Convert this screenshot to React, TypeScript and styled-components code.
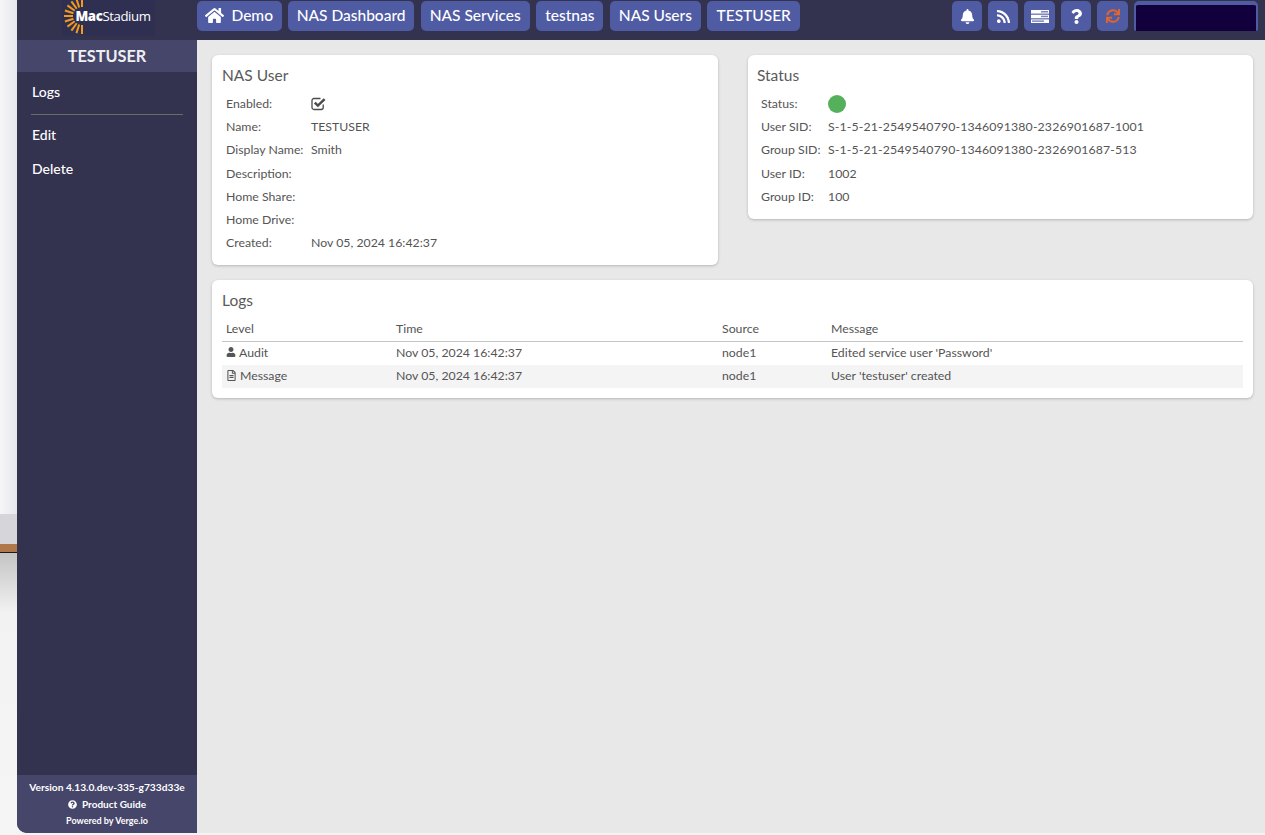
import React from "react";
import styled, { createGlobalStyle } from "styled-components";
import { FaHome, FaBell, FaRss, FaQuestion, FaSync, FaUser, FaRegFileAlt, FaQuestionCircle } from "react-icons/fa";

const Global = createGlobalStyle`
  html, body { margin: 0; padding: 0; height: 100%; overflow: hidden; }
  body { font-family: "Lato", "Open Sans", sans-serif; background: #f4f4f6; }
  #root { height: 100%; }
`;

const Shell = styled.div`
  display: flex;
  width: 1265px;
  height: 835px;
  overflow: hidden;
`;

const Backdrop = styled.div`
  width: 17px;
  flex: none;
  display: flex;
  flex-direction: column;
  box-shadow: inset -2px 0 2px -1px #8c8e96;
`;
const BackdropTop = styled.div`
  height: 514px;
  background: linear-gradient(90deg, #f6f6f8, #e6e8ee);
`;
const BackdropMid = styled.div`
  height: 30px;
  background: #d6d6da;
`;
const BackdropBand = styled.div`
  height: 8px;
  background: #b0784a;
  border-bottom: 1px solid #1a1a1a;
`;
const BackdropLow = styled.div`
  flex: 1;
  background: linear-gradient(180deg, #c4c4c4 0, #f2f2f2 60px, #f5f5f5 100%);
`;

const App = styled.div`
  flex: 1;
  height: 833px;
  display: flex;
  flex-direction: column;
  background: #e8e8e8;
  border-bottom-left-radius: 10px;
  overflow: hidden;
`;

const TopBar = styled.header`
  height: 40px;
  flex: none;
  display: flex;
  background: #33324f;
  padding-top: 1px;
  box-sizing: border-box;
`;
const LogoArea = styled.div`
  width: 180px;
  flex: none;
  display: flex;
  justify-content: center;
  margin-top: -1px;
  height: 36px;
`;
const Logo = styled.div`
  width: 93px;
  margin-left: 2px;
  display: flex;
  align-items: center;
  background: #2f2f52;
`;
const LogoText = styled.span`
  font-family: "Open Sans", sans-serif;
  color: #fff;
  font-size: 13.2px;
  letter-spacing: -0.4px;
  margin-left: -18px;
  margin-top: -5px;
  white-space: nowrap;
`;
const LogoBold = styled.b`
  font-weight: 800;
`;
const Crumbs = styled.nav`
  display: flex;
  gap: 6.6px;
`;
const Crumb = styled.a<{ $w: number }>`
  width: ${(p) => p.$w}px;
  height: 30px;
  padding-bottom: 2px;
  box-sizing: border-box;
  display: flex;
  align-items: center;
  justify-content: center;
  gap: 7px;
  background: #4f5ba3;
  border-radius: 5px;
  color: #fff;
  font-size: 15.5px;
  font-weight: 500;
`;
const Tools = styled.div`
  margin-left: auto;
  margin-right: 7px;
  display: flex;
  gap: 6px;
`;
const ToolBtn = styled.a<{ $w?: number; $c?: string }>`
  width: ${(p) => p.$w ?? 30}px;
  height: 30px;
  display: flex;
  align-items: center;
  justify-content: center;
  background: #4f5ba3;
  border-radius: 5px;
  color: ${(p) => p.$c ?? "#fff"};
  font-size: 15px;
`;
const SearchBox = styled.div`
  width: 124px;
  height: 30px;
  box-sizing: border-box;
  background: #12003c;
  border: solid #4f5ba3;
  border-width: 4px 2px 0;
  border-radius: 5px 5px 2px 2px;
`;

const Body = styled.div`
  flex: 1;
  display: flex;
  min-height: 0;
`;
const Sidebar = styled.aside`
  width: 180px;
  flex: none;
  display: flex;
  flex-direction: column;
  background: #33324f;
  color: #fff;
`;
const SideTitle = styled.div`
  height: 32px;
  padding-bottom: 2px;
  box-sizing: border-box;
  display: flex;
  align-items: center;
  justify-content: center;
  background: #46466a;
  font-size: 16.3px;
  font-weight: 700;
  color: #eeeef2;
`;
const SideItem = styled.a`
  display: block;
  padding-left: 15px;
  height: 34px;
  line-height: 40px;
  font-size: 14px;
  font-weight: 500;
`;
const SideRule = styled.hr`
  border: 0;
  height: 1px;
  background: #6c6a6c;
  margin: 8px 14px 0 14px;
`;
const SideFoot = styled.div`
  margin-top: auto;
  height: 58px;
  background: #46466a;
  display: flex;
  flex-direction: column;
  align-items: center;
  padding-top: 5px;
  box-sizing: border-box;
  gap: 1.5px;
  font-size: 10.2px;
  font-weight: 700;
  line-height: 15px;
`;
const GuideLine = styled.div`
  display: flex;
  align-items: center;
  gap: 5px;
  font-size: 10px;
`;
const Powered = styled.div`
  font-size: 9px;
`;

const Main = styled.main`
  flex: 1;
  padding: 15px 12px 0 15px;
  display: grid;
  grid-template-columns: 506px 505px;
  column-gap: 30px;
  row-gap: 15px;
  align-content: start;
  color: #555;
`;
const Card = styled.section<{ $wide?: boolean; $inset?: number }>`
  grid-column: ${(p) => (p.$wide ? "1 / -1" : "auto")};
  align-self: start;
  background: #fff;
  border-radius: 6px;
  box-shadow: 0 1px 3px rgba(0, 0, 0, 0.22);
  padding: 11px 10px ${(p) => (p.$wide ? 10 : 11)}px ${(p) => p.$inset ?? 10}px;
`;
const CardTitle = styled.h2`
  margin: 0 0 8px;
  font-size: 15.5px;
  line-height: 18px;
  font-weight: 400;
  color: #5a5a5a;
`;
const Fields = styled.div<{ $label: number }>`
  display: grid;
  grid-template-columns: ${(p) => p.$label}px 1fr;
  grid-auto-rows: 23.2px;
  padding-left: 4px;
  align-items: center;
  font-size: 12.3px;
`;
const Label = styled.div``;
const Value = styled.div`
  display: flex;
  align-items: center;
`;
const Sid = styled.span`
  letter-spacing: 0.14px;
`;
const StatusDot = styled.span`
  width: 18px;
  height: 18px;
  border-radius: 50%;
  background: #55b05b;
`;
const Table = styled.table`
  width: 100%;
  border-collapse: collapse;
  table-layout: fixed;
  font-size: 12.3px;
`;
const Th = styled.th<{ $w?: number }>`
  box-sizing: border-box;
  width: ${(p) => (p.$w ? `${p.$w}px` : "auto")};
  height: 24px;
  padding: 0 4px 2px;
  text-align: left;
  font-weight: 400;
  border-bottom: 1px solid #c4c4c4;
`;
const Tr = styled.tr<{ $alt?: boolean }>`
  background: ${(p) => (p.$alt ? "#f4f4f4" : "transparent")};
`;
const Td = styled.td`
  box-sizing: border-box;
  height: 23.5px;
  padding: 0 4px 2px;
`;
const LevelCell = styled.span`
  display: inline-flex;
  align-items: center;
  gap: 3px;
  vertical-align: middle;
  margin-bottom: 1px;
`;

const ServerIcon = () => (
  <svg width="18" height="13" viewBox="0 0 18 13">
    <rect x="0" y="0" width="18" height="3.6" fill="#fff" />
    <rect x="0" y="4.7" width="18" height="3.6" fill="#fff" />
    <rect x="0" y="9.4" width="18" height="3.6" fill="#fff" />
    <rect x="10" y="1" width="7" height="1.5" fill="#7f88bd" />
    <rect x="10" y="5.7" width="7" height="1.5" fill="#7f88bd" />
    <rect x="1" y="10.4" width="12" height="1.5" fill="#7f88bd" />
  </svg>
);

const CheckIcon = () => (
  <svg width="16" height="14" viewBox="0 0 16 14">
    <path
      d="M12.2 7.5V10.5a2 2 0 0 1-2 2H3a2 2 0 0 1-2-2V3.5a2 2 0 0 1 2-2H9.5"
      stroke="#4a4a4a"
      strokeWidth="1.3"
      fill="none"
    />
    <path d="M3.8 5.6L6.9 8.6L13.6 2.2" stroke="#4a4a4a" strokeWidth="2.5" fill="none" />
  </svg>
);

const rays = [90, 108, 126, 144, 162, 180, 198, 216, 234, 252, 270];

const Sunburst = () => (
  <svg width="32" height="36" viewBox="0 0 32 36" style={{ flex: "none" }}>
    {rays.map((a) => {
      const r = (a * Math.PI) / 180;
      const cx = 20;
      const cy = 16;
      return (
        <line
          key={a}
          x1={cx + Math.cos(r) * 9}
          y1={cy + Math.sin(r) * 9}
          x2={cx + Math.cos(r) * 18}
          y2={cy + Math.sin(r) * 18}
          stroke="#f39a1d"
          strokeWidth="2"
        />
      );
    })}
  </svg>
);

const crumbs: [string, number][] = [
  ["NAS Dashboard", 126],
  ["NAS Services", 109],
  ["testnas", 67],
  ["NAS Users", 91],
  ["TESTUSER", 92.5],
];

const userFields: [string, React.ReactNode][] = [
  ["Enabled:", <CheckIcon />],
  ["Name:", "TESTUSER"],
  ["Display Name:", "Smith"],
  ["Description:", ""],
  ["Home Share:", ""],
  ["Home Drive:", ""],
  ["Created:", "Nov 05, 2024 16:42:37"],
];

const statusFields: [string, React.ReactNode][] = [
  ["Status:", <StatusDot />],
  ["User SID:", <Sid>S-1-5-21-2549540790-1346091380-2326901687-1001</Sid>],
  ["Group SID:", <Sid>S-1-5-21-2549540790-1346091380-2326901687-513</Sid>],
  ["User ID:", "1002"],
  ["Group ID:", "100"],
];

const renderFields = (rows: [string, React.ReactNode][]) =>
  rows.map(([k, v]) => (
    <React.Fragment key={k}>
      <Label>{k}</Label>
      <Value>{v}</Value>
    </React.Fragment>
  ));

export default function AppPage() {
  return (
    <Shell>
      <Global />
      <Backdrop>
        <BackdropTop />
        <BackdropMid />
        <BackdropBand />
        <BackdropLow />
      </Backdrop>
      <App>
        <TopBar>
          <LogoArea>
            <Logo>
              <Sunburst />
              <LogoText>
                <LogoBold>Mac</LogoBold>Stadium
              </LogoText>
            </Logo>
          </LogoArea>
          <Crumbs>
            <Crumb $w={84.5}>
              <FaHome size={19} />
              Demo
            </Crumb>
            {crumbs.map(([t, w]) => (
              <Crumb key={t} $w={w}>
                {t}
              </Crumb>
            ))}
          </Crumbs>
          <Tools>
            <ToolBtn><FaBell /></ToolBtn>
            <ToolBtn><FaRss /></ToolBtn>
            <ToolBtn $w={31}><ServerIcon /></ToolBtn>
            <ToolBtn><FaQuestion /></ToolBtn>
            <ToolBtn $w={31} $c="#e0652f"><FaSync size={14} /></ToolBtn>
            <SearchBox />
          </Tools>
        </TopBar>
        <Body>
          <Sidebar>
            <SideTitle>TESTUSER</SideTitle>
            <SideItem>Logs</SideItem>
            <SideRule />
            <SideItem>Edit</SideItem>
            <SideItem>Delete</SideItem>
            <SideFoot>
              <div>Version 4.13.0.dev-335-g733d33e</div>
              <GuideLine>
                <FaQuestionCircle size={9} />
                Product Guide
              </GuideLine>
              <Powered>Powered by Verge.io</Powered>
            </SideFoot>
          </Sidebar>
          <Main>
            <Card>
              <CardTitle>NAS User</CardTitle>
              <Fields $label={85}>{renderFields(userFields)}</Fields>
            </Card>
            <Card $inset={9}>
              <CardTitle>Status</CardTitle>
              <Fields $label={67}>{renderFields(statusFields)}</Fields>
            </Card>
            <Card $wide>
              <CardTitle>Logs</CardTitle>
              <Table>
                <thead>
                  <tr>
                    <Th $w={170}>Level</Th>
                    <Th $w={326}>Time</Th>
                    <Th $w={109}>Source</Th>
                    <Th>Message</Th>
                  </tr>
                </thead>
                <tbody>
                  <Tr>
                    <Td><LevelCell><FaUser size={10} />Audit</LevelCell></Td>
                    <Td>Nov 05, 2024 16:42:37</Td>
                    <Td>node1</Td>
                    <Td>Edited service user 'Password'</Td>
                  </Tr>
                  <Tr $alt>
                    <Td><LevelCell><FaRegFileAlt size={11} />Message</LevelCell></Td>
                    <Td>Nov 05, 2024 16:42:37</Td>
                    <Td>node1</Td>
                    <Td>User 'testuser' created</Td>
                  </Tr>
                </tbody>
              </Table>
            </Card>
          </Main>
        </Body>
      </App>
    </Shell>
  );
}
